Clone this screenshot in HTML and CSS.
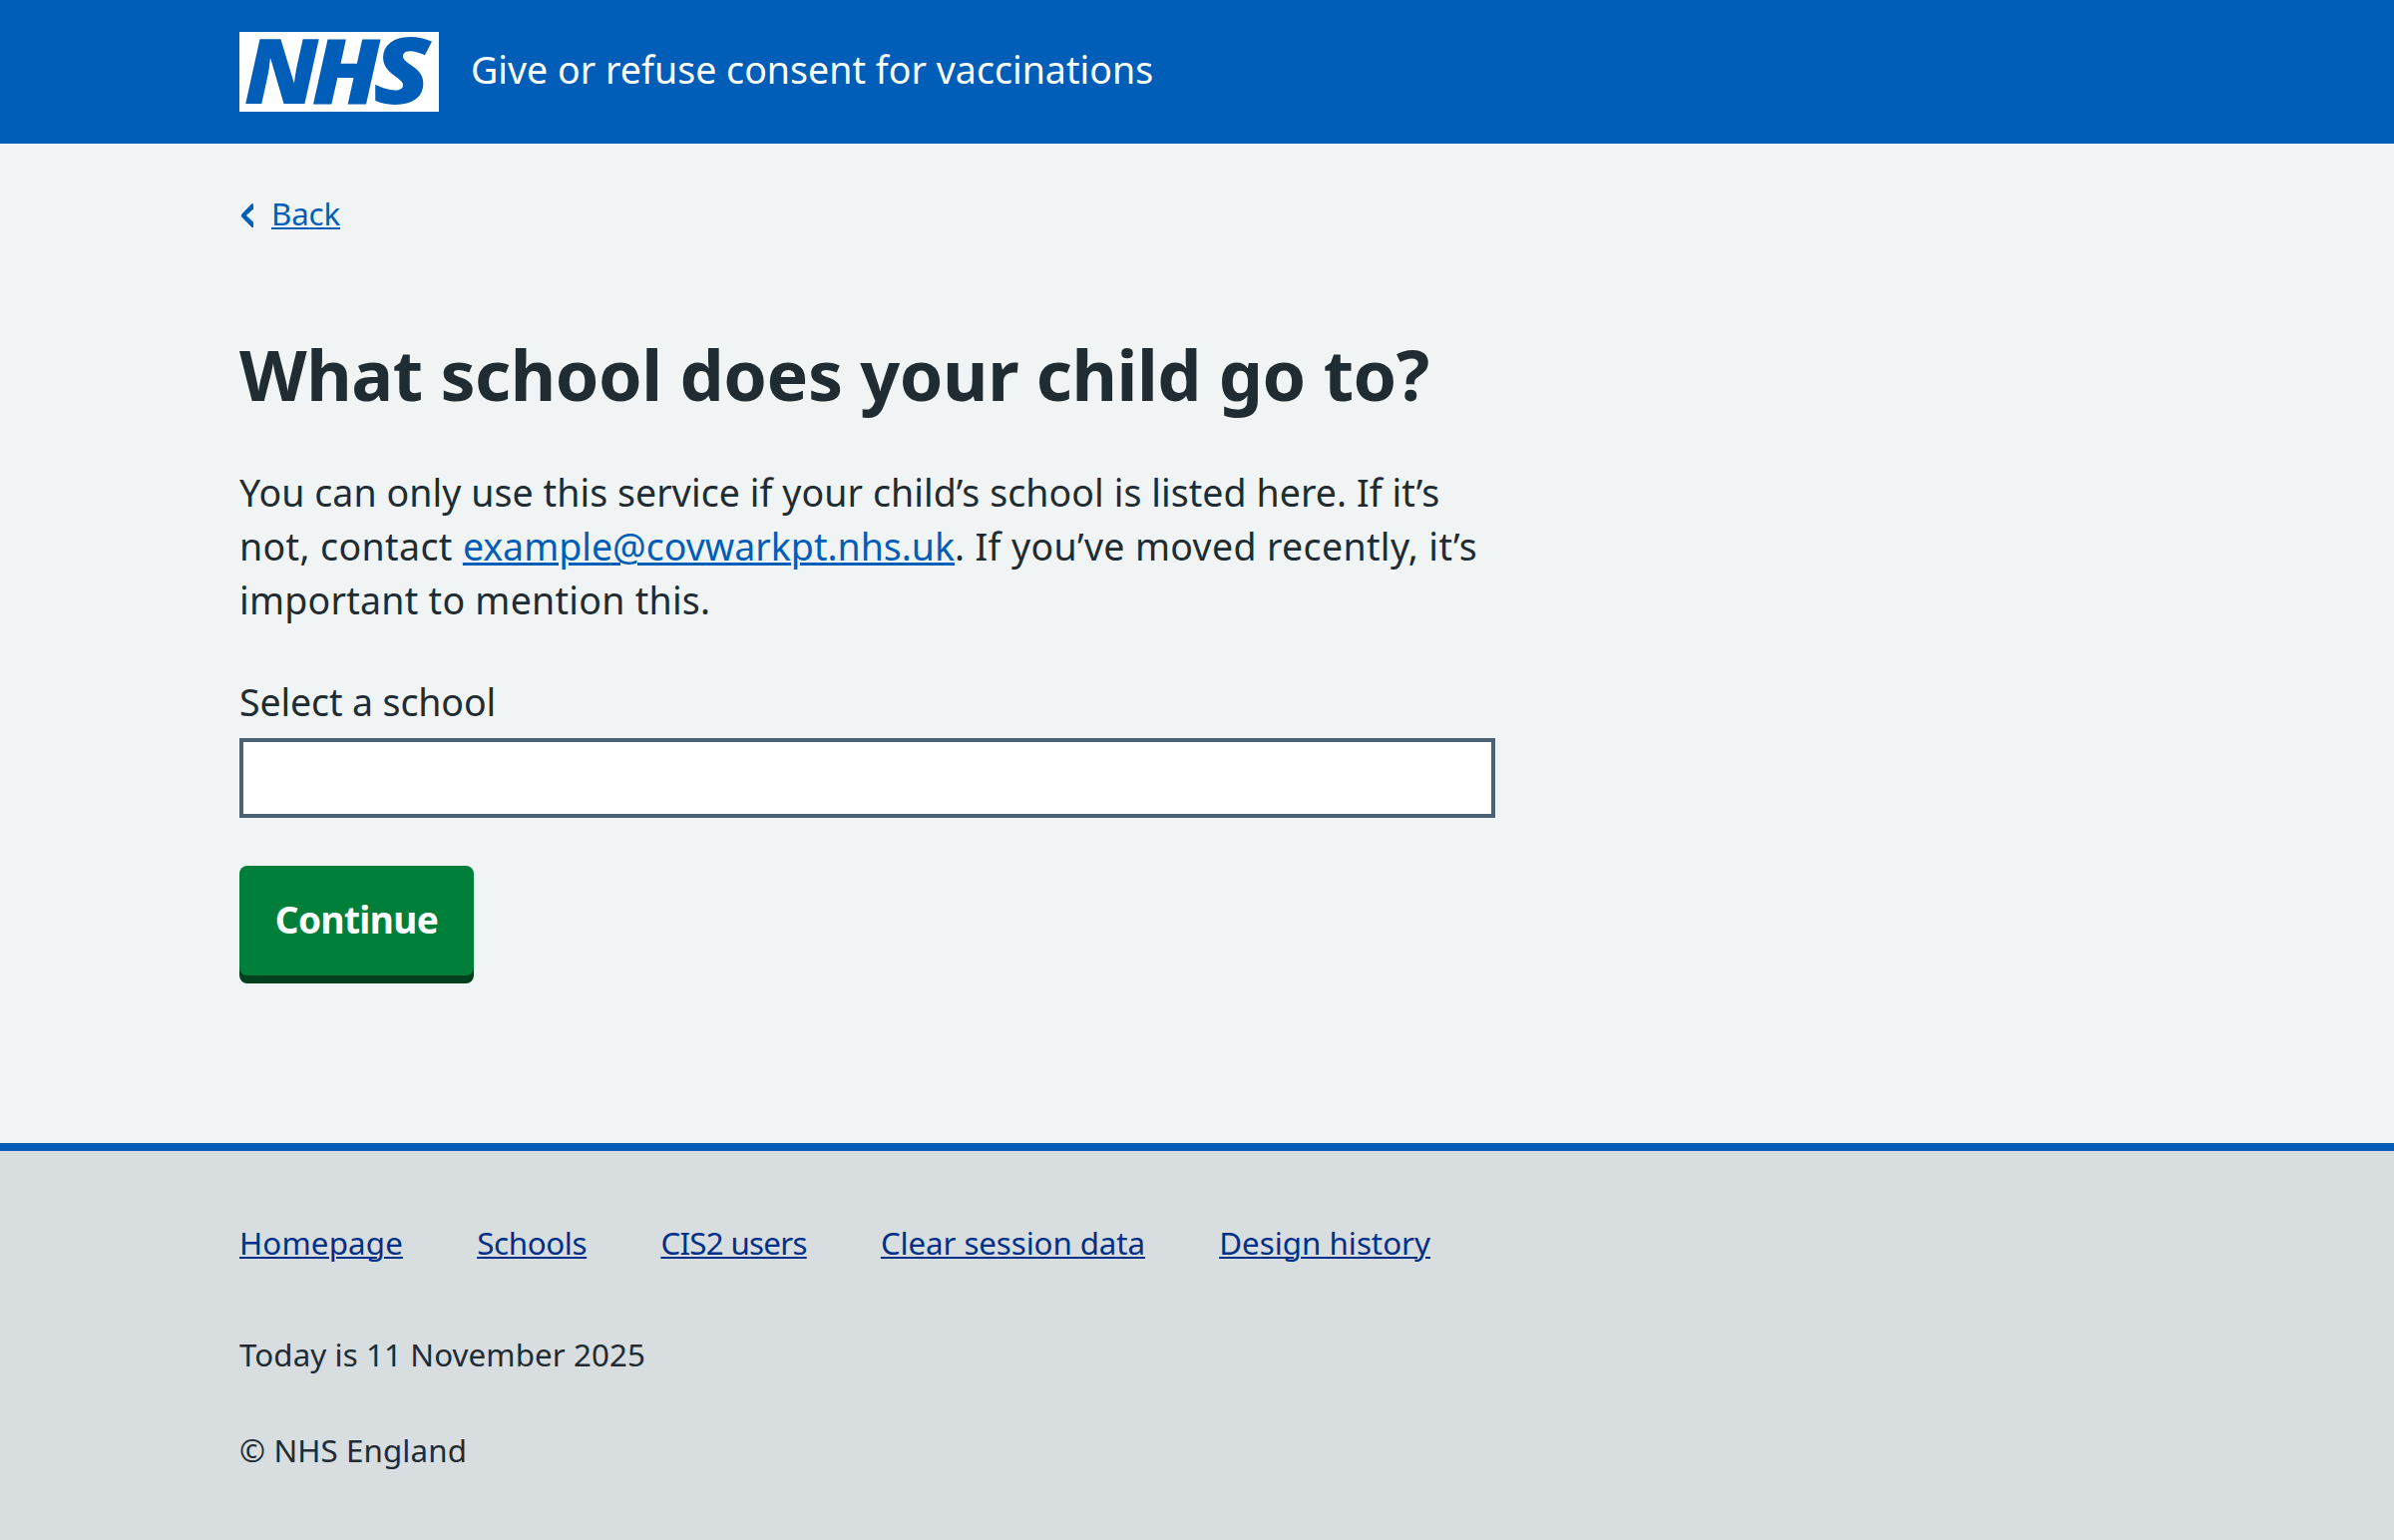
FILE: index.html
```html
<!DOCTYPE html>
<html lang="en">
<head>
<meta charset="utf-8">
<title>What school does your child go to?</title>
<link rel="stylesheet" href="styles.css">
</head>
<body>
<header class="header">
  <div class="container header-inner">
    <svg class="logo" viewBox="0 0 200 80" role="img" aria-label="NHS">
      <rect width="200" height="80" fill="#fff"/>
      <g class="logo-text">
        <text transform="translate(4.7 72.2) scale(1.036 1)">N</text>
        <text transform="translate(72.4 72.2) scale(1.055 1)">H</text>
        <text transform="translate(134 72.4) scale(1.16 1.02)">S</text>
      </g>
    </svg>
    <span class="service-name">Give or refuse consent for vaccinations</span>
  </div>
</header>
<div class="container content">
  <a class="back-link" href="#">
    <svg class="chevron" viewBox="0 0 14 24" aria-hidden="true"><path d="M14 0.3V5.4L6.9 12L14 18.8V23.9H12.5L2.5 13.7Q1.2 12.1 2.5 10.5L12.4 0.3Z"/></svg>
    <span class="back-text">Back</span>
  </a>
  <main class="main">
    <h1 class="heading">What school does your child go to?</h1>
    <p class="body-text">You can only use this service if your child’s school is listed here. If it’s<br><span class="t-not">not, contact </span><a class="email" href="#">example@covwarkpt.nhs.uk</a><span class="t-moved">. If you’ve moved recently, it’s</span><br><span class="t-important">important to mention this.</span></p>
    <label class="label" for="school">Select a school</label>
    <input class="input" id="school" type="text">
    <button class="button" type="button">Continue</button>
  </main>
</div>
<footer class="footer">
  <div class="container">
    <ul class="footer-list">
      <li class="f-home"><a href="#">Homepage</a></li>
      <li class="f-schools"><a href="#">Schools</a></li>
      <li class="f-users"><a href="#">CIS2 users</a></li>
      <li class="f-clear"><a href="#">Clear session data</a></li>
      <li><a href="#">Design history</a></li>
    </ul>
    <p class="footer-text">Today is 11 November 2025</p>
    <p class="footer-text copyright">© NHS England</p>
  </div>
</footer>
</body>
</html>
```
FILE: styles.css
```css
* { box-sizing: border-box; }
body {
  margin: 0;
  min-height: 100vh;
  display: flex;
  flex-direction: column;
  background: #f0f4f5;
  color: #212b32;
  font-family: "Noto Sans", "Open Sans", Arial, sans-serif;
  font-size: 37.5px;
  line-height: 54px;
}
p, h1, ul { margin: 0; padding: 0; }
.container { width: 1920px; margin: 0 auto; }

.header { height: 144px; background: #005eb8; color: #fff; }
.header-inner { height: 144px; display: flex; align-items: center; }
.logo { width: 200px; height: 80px; flex: none; overflow: visible; }
.logo-text {
  fill: #005eb8;
  font-family: "Noto Sans", sans-serif;
  font-size: 91px;
  font-style: italic;
  font-weight: 900;
}
.service-name { margin-left: 32px; padding-bottom: 4px; letter-spacing: 0.03px; }

.content { height: 1002px; padding-top: 46px; }
.back-link {
  display: flex;
  width: max-content;
  font-size: 31.3px;
  line-height: 48px;
  color: #005eb8;
  text-decoration: none;
}
.chevron { width: 14px; height: 24px; margin: 14px 18px 0 0; fill: #005eb8; }
.back-text {
  letter-spacing: -0.15px;
  text-decoration: underline 2px;
  text-underline-offset: 2px;
}
.main { width: 1259px; padding-top: 95px; }
.heading {
  font-size: 70px;
  line-height: 84px;
  font-weight: 700;
  letter-spacing: -0.46px;
  white-space: nowrap;
}
.body-text { margin-top: 50px; white-space: nowrap; letter-spacing: 0.07px; }
.t-not { letter-spacing: 0.38px; }
.t-moved { letter-spacing: 0.35px; }
.t-important { letter-spacing: 0.26px; }
.email {
  color: #005eb8;
  letter-spacing: 0;
  text-decoration: underline 3px;
  text-underline-offset: 2px;
}
.label { display: block; margin-top: 48px; letter-spacing: -0.12px; }
.input {
  display: block;
  width: 100%;
  height: 80px;
  margin-top: 9px;
  padding: 8px;
  border: 4px solid #4c6272;
  border-radius: 0;
  background: #fff;
  font: inherit;
}
.button {
  display: block;
  width: 235px;
  height: 110px;
  margin-top: 48px;
  padding: 0 0 2px;
  border: 0;
  border-radius: 8px;
  background: #007f3b;
  box-shadow: 0 8px 0 #00401e;
  color: #fff;
  font: 700 37px/54px "Noto Sans", "Open Sans", Arial, sans-serif;
  letter-spacing: -0.6px;
}

.footer {
  flex: 1;
  padding-top: 68px;
  border-top: 8px solid #005eb8;
  background: #d8dde0;
  font-size: 31.3px;
  line-height: 48px;
}
.footer-list { display: flex; gap: 74.2px; list-style: none; }
.footer-list a {
  color: #003087;
  text-decoration: underline 2px;
  text-underline-offset: 2px;
}
.f-home { letter-spacing: 0.15px; }
.f-schools { letter-spacing: -0.35px; }
.f-users { letter-spacing: -0.72px; }
.f-clear { letter-spacing: -0.1px; }
.footer-text { margin-top: 64px; letter-spacing: 0.09px; }
.copyright { margin-top: 48px; letter-spacing: 0.1px; }
```
